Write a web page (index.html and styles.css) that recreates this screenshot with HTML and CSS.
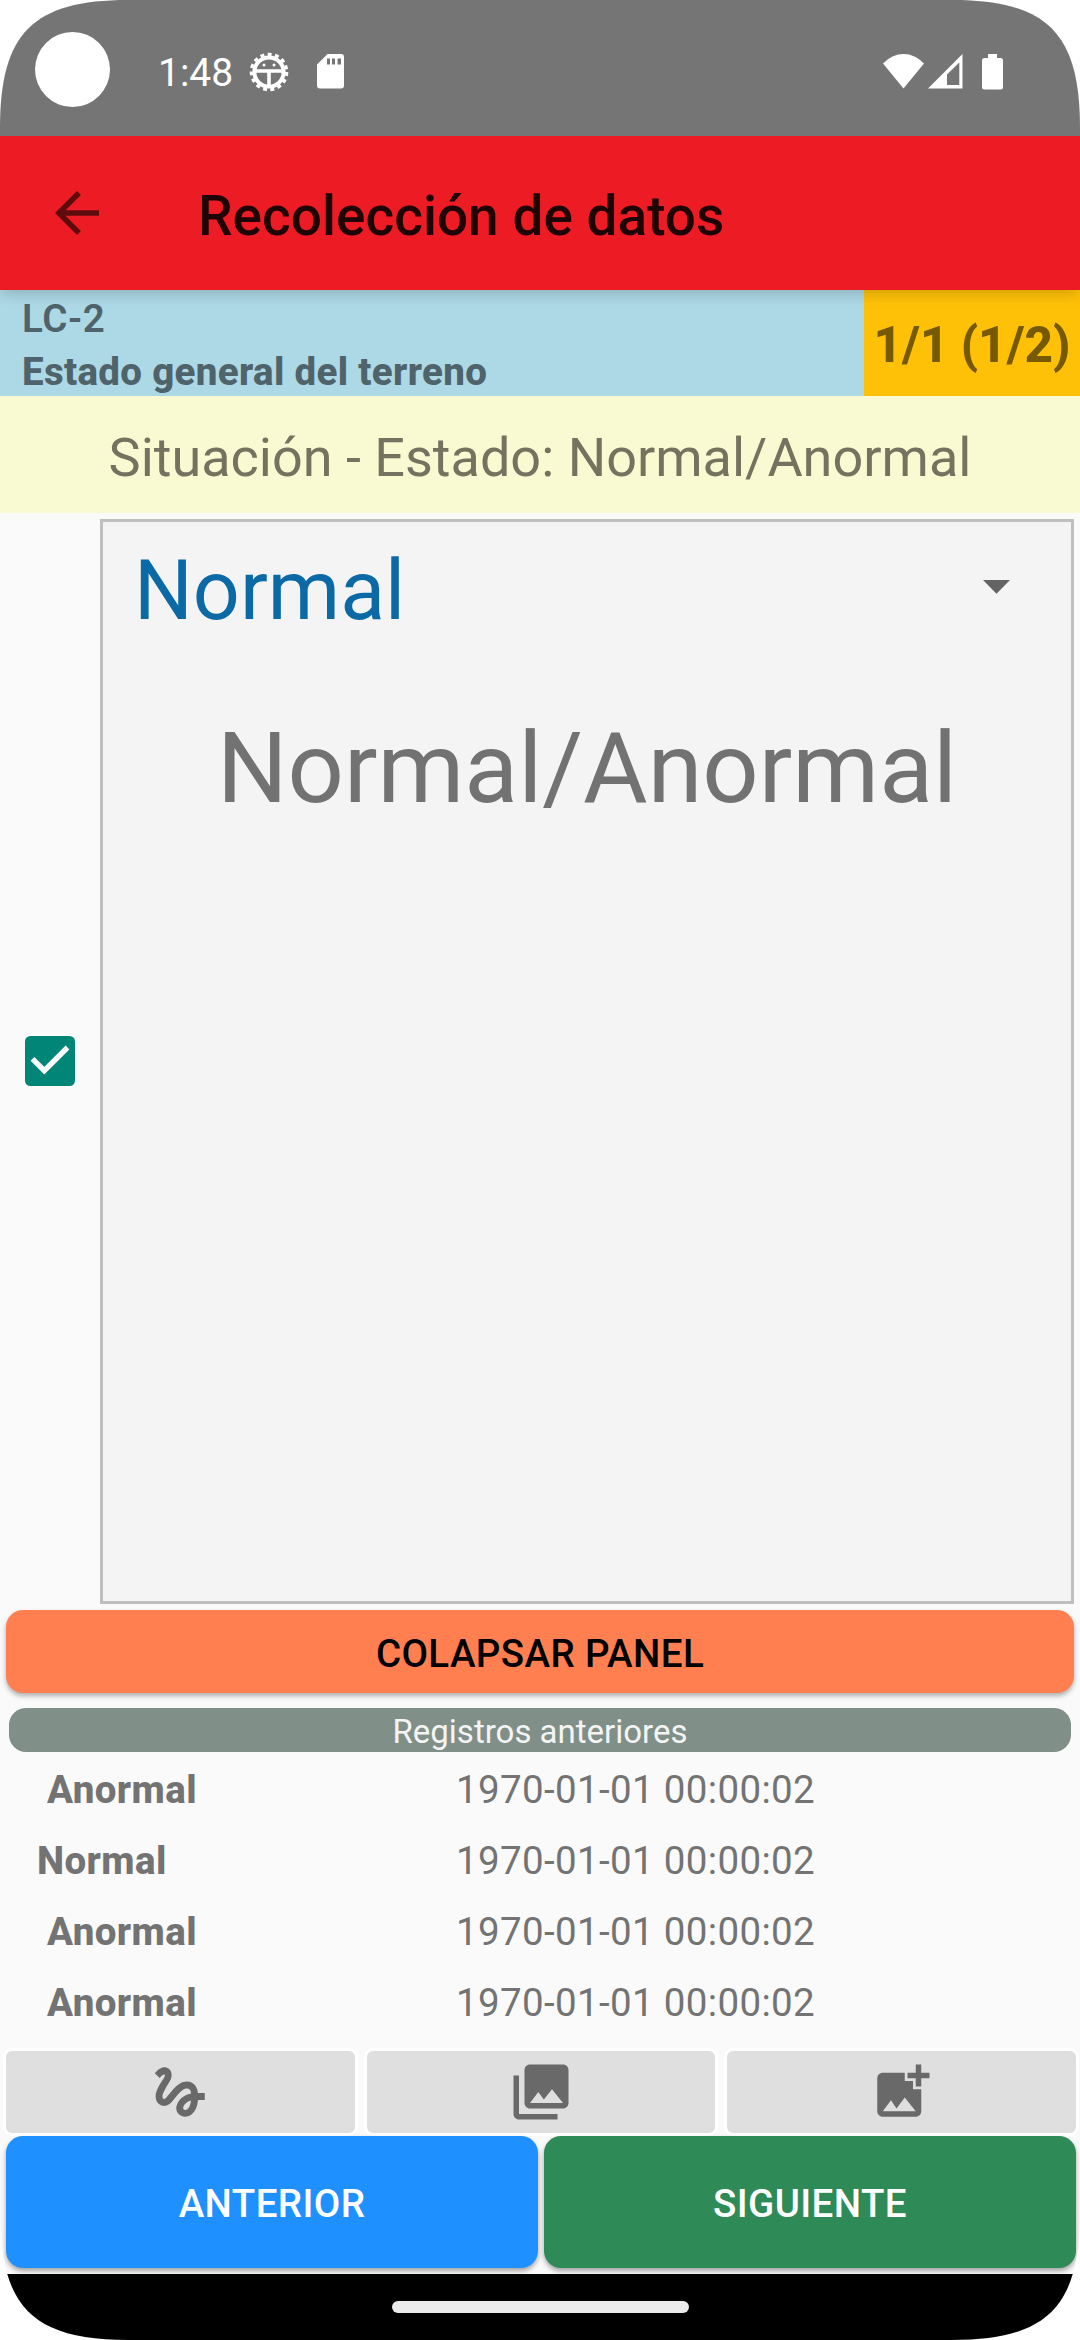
FILE: index.html
```html
<!DOCTYPE html>
<html lang="es">
<head>
<meta charset="utf-8">
<title>Recolección de datos</title>
<link rel="stylesheet" href="styles.css">
</head>
<body>
<div class="screen">
  <div class="status">
    <span class="camera"></span>
    <span class="clock">1:48</span>
    <svg class="gear" viewBox="0 0 40 40" width="40" height="40">
      <circle cx="20" cy="20" r="17" fill="none" stroke="#fff" stroke-width="4.600" stroke-dasharray="3.800 3.320"/>
      <circle cx="20" cy="20" r="14.600" fill="none" stroke="#fff" stroke-width="4"/>
      <path d="M5 19h30M20 19v15" stroke="#fff" stroke-width="3.600" fill="none"/>
      <circle cx="15" cy="13" r="1.500" fill="#fff"/><circle cx="25" cy="13" r="1.500" fill="#fff"/>
    </svg>
    <svg class="sd" viewBox="0 0 27 35" width="27" height="35">
      <path fill="#fff" fill-rule="evenodd" d="M10.500 0H24a3 3 0 0 1 3 3v28.500a3 3 0 0 1-3 3H3a3 3 0 0 1-3-3V10.500ZM10 4.500v6h3v-6ZM15 4.500v6h3v-6ZM20.500 4.500v6h3.500v-6Z"/>
    </svg>
    <span class="grow"></span>
    <svg class="wifi" viewBox="0 0 41 35" width="41" height="35"><path fill="#fff" d="M0 9.500Q9 0 20.500 0T41 9.500L20.500 34.500Z"/></svg>
    <svg class="signal" viewBox="0 0 35 35" width="35" height="35"><path fill="#fff" fill-rule="evenodd" d="M34.500 0v34.500H0ZM31.300 8.500 19 20.500V31h12.300Z"/></svg>
    <svg class="battery" viewBox="0 0 21 36" width="21" height="36"><path fill="#fff" d="M6 0h9v4h3.500A2.500 2.500 0 0 1 21 6.500v26.500a2.500 2.500 0 0 1-2.500 2.500h-16A2.500 2.500 0 0 1 0 33V6.500A2.500 2.500 0 0 1 2.500 4H6Z"/></svg>
  </div>

  <header class="appbar">
    <svg class="back" viewBox="0 0 24 24" width="66" height="66"><path d="M20 11H7.830l5.590-5.590L12 4l-8 8 8 8 1.410-1.410L7.830 13H20z"/></svg>
    <h1 class="title">Recolección de datos</h1>
  </header>

  <div class="info">
    <div class="place">
      <div class="code">LC-2</div>
      <div class="name">Estado general del terreno</div>
    </div>
    <div class="count">1/1 (1/2)</div>
  </div>

  <div class="question">Situación - Estado: Normal/Anormal</div>

  <main class="entry">
    <div class="check">
      <svg viewBox="0 0 50 50" width="50" height="50"><rect width="50" height="50" rx="5.500" fill="#018577"/><path d="M7.500 22.800 19.300 34.600 42.500 11.500" fill="none" stroke="#fafafa" stroke-width="5.400"/></svg>
    </div>
    <section class="panel">
      <div class="select">
        <span class="value">Normal</span>
        <svg viewBox="0 0 27 14" width="27" height="14"><path d="M0 0h27L13.500 13.800Z" fill="#636363"/></svg>
      </div>
      <div class="hint">Normal/Anormal</div>
    </section>
  </main>

  <button class="collapse">COLAPSAR PANEL</button>
  <div class="records-title">Registros anteriores</div>
  <ul class="records">
    <li><b class="offset">Anormal</b><span>1970-01-01 00:00:02</span></li>
    <li><b>Normal</b><span>1970-01-01 00:00:02</span></li>
    <li><b class="offset">Anormal</b><span>1970-01-01 00:00:02</span></li>
    <li><b class="offset">Anormal</b><span>1970-01-01 00:00:02</span></li>
  </ul>

  <div class="tools">
    <button class="tool"><svg viewBox="0 0 24 24" width="66" height="66"><path d="M4.590 6.890c.7-.71 1.400-1.350 1.710-1.220.5.2 0 1.030-.3 1.520-.25.42-2.860 3.890-2.860 6.310 0 1.280.48 2.340 1.340 2.980.75.56 1.740.73 2.640.46 1.070-.31 1.950-1.400 3.060-2.770 1.210-1.490 2.830-3.440 4.080-3.440 1.630 0 1.650 1.010 1.760 1.790-3.780.64-5.380 3.670-5.380 5.370 0 1.700 1.440 3.090 3.210 3.090 1.630 0 4.290-1.330 4.690-6.100H21v-2.500h-2.470c-.15-1.650-1.090-4.200-4.030-4.200-2.250 0-4.180 1.910-4.940 2.840-.58.73-2.060 2.480-2.290 2.720-.25.3-.68.84-1.110.84-.45 0-.72-.83-.36-1.920.35-1.090 1.400-2.860 1.850-3.520.78-1.140 1.300-1.920 1.300-3.280C8.950 3.690 7.310 3 6.440 3 5.120 3 3.970 4 3.720 4.250c-.36.36-.66.66-.88.93l1.750 1.710zm9.290 11.660c-.31 0-.74-.26-.74-.72 0-.6.73-2.200 2.870-2.760-.3 2.690-1.430 3.480-2.130 3.480z"/></svg></button>
    <button class="tool"><svg viewBox="0 0 24 24" width="66" height="66"><path d="M22 16V4c0-1.100-.9-2-2-2H8c-1.100 0-2 .9-2 2v12c0 1.100.9 2 2 2h12c1.100 0 2-.9 2-2zm-11-4l2.030 2.710L16 11l4 5H8l3-4zM2 6v14c0 1.100.9 2 2 2h14v-2H4V6H2z"/></svg></button>
    <button class="tool"><svg viewBox="0 0 24 24" width="66" height="66"><path d="M19 7v2.990s-1.990.01-2 0V7h-3s.01-1.990 0-2h3V2h2v3h3v2h-3zm-3 4V8h-3V5H5c-1.100 0-2 .9-2 2v12c0 1.100.9 2 2 2h12c1.100 0 2-.9 2-2v-8h-3zM5 19l3-4 2 3 3-4 4 5H5z"/></svg></button>
  </div>

  <div class="nav">
    <button class="prev">ANTERIOR</button>
    <button class="next">SIGUIENTE</button>
  </div>
  <div class="gesture"><span class="pill"></span></div>
</div>
</body>
</html>
```
FILE: styles.css
```css
* { box-sizing: border-box; }
body { margin: 0; background: #fff; font-family: Roboto, sans-serif; font-size: 38.5px; color: #737373; }
svg { display: block; flex: none; }
button { border: 0; padding: 0; margin: 0; font: inherit; font-weight: 500; letter-spacing: .4px; }

.screen {
  position: relative;
  width: 1080px; height: 2340px;
  display: flex; flex-direction: column;
  background: #fafafa;
  clip-path: path("M0 128C0 33 33 0 128 0H952C1047 0 1080 33 1080 128V2212C1080 2307 1047 2340 952 2340H128C33 2340 0 2307 0 2212Z");
}

.status { height: 136px; flex: none; background: #757575; display: flex; align-items: center; padding: 7px 77px 0 158px; color: #fff; }
.camera { position: absolute; left: 35px; top: 32px; width: 75px; height: 75px; border-radius: 50%; background: #fff; }
.clock { font-size: 39px; line-height: 46px; padding-top: 2px; width: 91px; white-space: nowrap; }
.sd { margin-left: 28px; }
.grow { flex: 1; }
.wifi { margin-right: 4px; }
.signal { margin-right: 19px; }

.appbar { height: 154px; flex: none; background: #ed1c24; display: flex; align-items: center; padding-left: 44px; position: relative; z-index: 1; box-shadow: 0 5px 14px -2px rgba(0,0,0,.2); clip-path: inset(0 0 -30px 0); }
.back { fill: #5e0b0e; }
.title { margin: 0 0 0 88px; padding-top: 6px; font-size: 55px; font-weight: 500; line-height: 64px; color: #1f0405; }

.info { height: 106px; flex: none; display: flex; font-weight: 800; }
.place { flex: 1; background: #add8e6; padding: 2px 0 0 22px; color: #4f636a; line-height: 53px; height: 106px; letter-spacing: .32px; }
.code { font-weight: 600; letter-spacing: .6px; }
.count { width: 216px; background: #ffc107; color: #755903; font-size: 49.5px; line-height: 106px; padding-top: 2px; height: 106px; text-align: center; white-space: nowrap; }

.question { height: 117px; flex: none; background: #fafad2; color: #737360; font-size: 54px; line-height: 112px; padding-top: 6px; text-align: center; }

.entry { flex: none; height: 1097px; display: flex; padding: 6px 6px 6px 0; }
.check { width: 100px; display: flex; align-items: center; justify-content: center; padding-bottom: 1px; }
.panel { flex: 1; background: #f4f4f4; border: 3px solid #bfbfbf; }
.select { height: 130px; display: flex; align-items: center; justify-content: space-between; padding: 0 61px 0 31px; }
.value { font-size: 82.5px; line-height: 97px; color: #0b6aa5; padding-top: 7px; }
.hint { font-size: 99px; line-height: 116px; text-align: center; color: #727272; padding-top: 58px; }

.collapse { flex: none; height: 83px; margin: 0 6px; border-radius: 17px; background: #ff7f50; color: #000; padding-top: 3px; box-shadow: 0 3px 5px rgba(0,0,0,.3); }
.records-title { flex: none; height: 44px; margin: 15px 9px 2px; border-radius: 17px; background: #808f87; color: #f4f4f4; font-size: 33px; line-height: 41px; padding-top: 3px; text-align: center; }
.records { flex: none; list-style: none; margin: 0; padding: 0 0 0 37px; height: 294px; line-height: 71px; }
.records li { height: 71px; display: flex; }
.records b { width: 419px; font-weight: 800; letter-spacing: .4px; }
.records span { letter-spacing: .35px; }
.records .offset { padding-left: 10px; }

.tools { flex: none; height: 88px; display: grid; grid-template-columns: repeat(3, 1fr); gap: 6px; padding: 0 1px 0 3px; }
.tool { background: #dfdfdf; border: 3px solid #fff; border-radius: 9px; display: flex; align-items: center; justify-content: center; }
.tool svg { fill: #696969; }

.nav { flex: none; height: 138px; display: grid; grid-template-columns: 1fr 1fr; gap: 6px; padding: 0 4px 6px 6px; }
.nav button { border-radius: 17px; color: #fff; padding-top: 2px; box-shadow: 0 3px 5px rgba(0,0,0,.35); }
.nav .prev { background: #1e90ff; }
.nav .next { background: #2e8b57; }

.gesture { flex: none; height: 66px; background: #000; display: flex; align-items: center; justify-content: center; position: relative; }
.pill { width: 297px; height: 12px; border-radius: 6px; background: #ebebeb; }
```
